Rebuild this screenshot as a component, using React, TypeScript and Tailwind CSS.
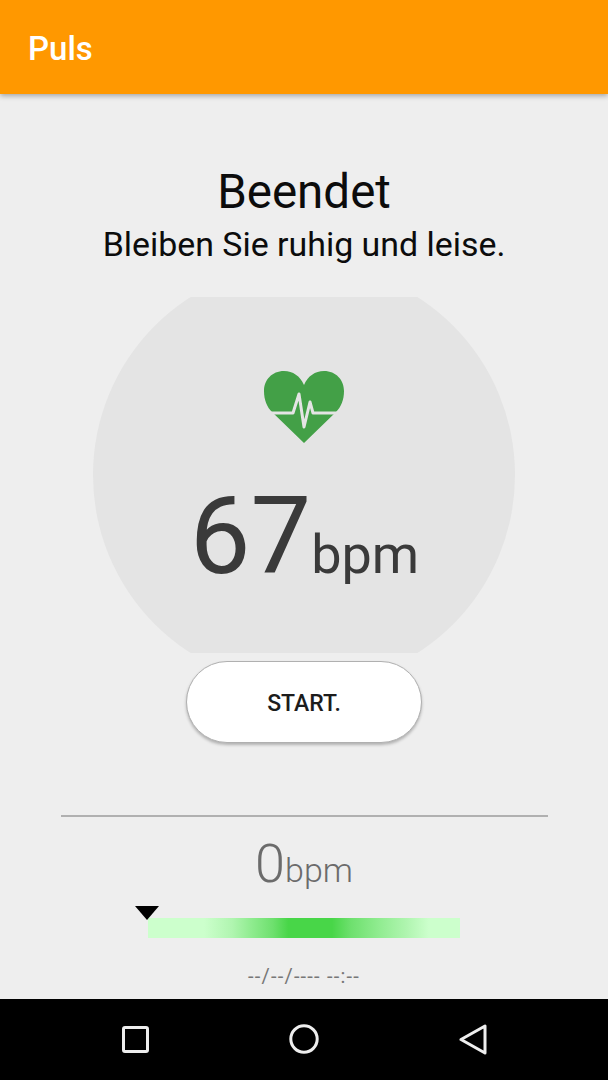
const font = { fontFamily: 'Roboto, sans-serif' };

function HeartIcon() {
  return (
    <svg width="80" height="72" viewBox="0 0 80 72" className="block">
      <path
        d="M40 14C36 5 29 0 20 0C8 0 0 9 0 20C0 29 3 36 8 41L40 72L72 41C77 36 80 29 80 20C80 9 72 0 60 0C51 0 44 5 40 14Z"
        fill="#43a047"
      />
      <path
        d="M3 42H29L35 23L40 56L46 31L49 42H77"
        fill="none"
        stroke="#e4e4e4"
        strokeWidth="3"
        strokeLinejoin="round"
      />
    </svg>
  );
}

function NavBar() {
  return (
    <nav className="h-[81px] bg-black flex items-center justify-between pl-[122px] pr-[121px] pb-[1px]">
      <svg width="27" height="27" viewBox="0 0 27 27">
        <rect x="1.5" y="1.5" width="24" height="24" rx="1.5" fill="none" stroke="#eee" strokeWidth="3" />
      </svg>
      <svg width="30" height="30" viewBox="0 0 30 30">
        <circle cx="15" cy="15" r="13.2" fill="none" stroke="#eee" strokeWidth="3" />
      </svg>
      <svg width="28" height="31" viewBox="0 0 28 31">
        <path d="M2 15.5L26 2V29Z" fill="none" stroke="#eee" strokeWidth="3" strokeLinejoin="round" />
      </svg>
    </nav>
  );
}

export default function App() {
  return (
    <div className="w-[608px] h-[1080px] flex flex-col bg-[#eeeeee] overflow-hidden" style={font}>
      <header className="h-[94px] shrink-0 bg-[#ff9800] flex items-center pl-[28px] shadow-[0_2px_5px_rgba(0,0,0,0.3)] relative">
        <span className="text-[33px] font-medium text-white leading-none pt-[2px]">Puls</span>
      </header>

      <main className="flex-1 flex flex-col items-center pt-[70px]">
        <h1 className="text-[47.5px] leading-[54px] text-[#0c0c0c] pt-[1px]">Beendet</h1>
        <p className="text-[33.9px] leading-[40px] text-[#0c0c0c] mt-[6px]">Bleiben Sie ruhig und leise.</p>

        <section className="mt-[32px] w-[422px] h-[356px] bg-[#e4e4e4] [clip-path:circle(211px_at_center)] flex flex-col items-center pt-[74px]">
          <HeartIcon />
          <div className="flex items-baseline text-[#3a3a3a] mt-[29px] ml-[1px]">
            <span className="text-[108px] leading-[128px]">67</span>
            <span className="text-[54px] leading-[60px]">bpm</span>
          </div>
        </section>

        <button
          type="button"
          className="mt-[8px] w-[236px] h-[82px] pt-[4px] rounded-full bg-white border border-[#b0b0b0] shadow-[0_2px_3px_rgba(0,0,0,0.25)] text-[23px] font-medium text-[#1c1c1c]"
        >
          START.
        </button>

        <div className="mt-[72px] w-[487px] h-[2px] bg-[#b0b0b0]" />

        <div className="mt-[14px] flex items-baseline text-[#6b6b6b] font-light">
          <span className="text-[54px] leading-[66px]">0</span>
          <span className="text-[34px] leading-[40px]">bpm</span>
        </div>

        <div className="relative mt-[21px] w-[312px] h-[20px] bg-[linear-gradient(90deg,#ccffcc_0%,#ccffcc_18%,#b0f5b0_27%,#90ec90_33%,#6ee06e_40%,#48d648_45%,#48d648_59%,#6ee06e_65%,#90ec90_74%,#b0f5b0_83%,#ccffcc_90%,#ccffcc_100%)]">
          <svg width="24" height="14" viewBox="0 0 24 14" className="absolute left-[-13px] top-[-12px]">
            <path d="M0 0H24L12 14Z" fill="#000" />
          </svg>
        </div>

        <p className="mt-[26px] text-[20px] leading-[24px] tracking-[1.2px] text-[#777777]">--/--/---- --:--</p>
      </main>

      <NavBar />
    </div>
  );
}
